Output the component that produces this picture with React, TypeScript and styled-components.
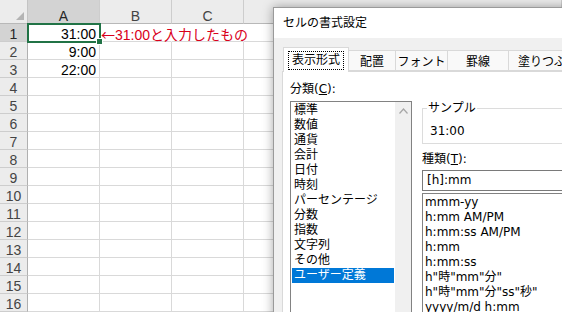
import { Fragment } from 'react';
import styled, { createGlobalStyle } from 'styled-components';

const GlobalStyle = createGlobalStyle`
  html, body {
    margin: 0;
    padding: 0;
  }
  body {
    background: #fff;
    font-family: "Liberation Sans", "Noto Sans CJK JP", sans-serif;
  }
`;

const Screen = styled.div`
  position: relative;
  width: 562px;
  height: 312px;
  overflow: hidden;
  background: #fff;
`;

/* ---------- spreadsheet ---------- */

const Sheet = styled.div`
  display: grid;
  grid-template-columns: 28px 72px 72px 72px 1fr;
  grid-template-rows: 24px;
  grid-auto-rows: 18px;
  font-family: "Liberation Sans", "Noto Sans CJK JP", sans-serif;
  font-size: 14px;
  color: #000;
`;

const Corner = styled.div`
  box-sizing: border-box;
  display: flex;
  align-items: flex-end;
  justify-content: flex-end;
  padding: 0 3px 3px 0;
  background: #ececec;
  border-right: 1px solid #c4c4c4;
  border-bottom: 1px solid #b8b8b8;
`;

const ColHeader = styled.div<{ $selected?: boolean }>`
  box-sizing: border-box;
  padding-top: 9px;
  line-height: 14px;
  text-align: center;
  color: ${p => (p.$selected ? '#262626' : '#444')};
  background: ${p => (p.$selected ? '#d3d3d3' : '#ececec')};
  border-right: 1px solid #cdcdcd;
  border-bottom: 1px solid #b8b8b8;
`;

const RowHeader = styled.div<{ $selected?: boolean }>`
  box-sizing: border-box;
  padding-top: 3px;
  line-height: 14px;
  text-align: center;
  color: ${p => (p.$selected ? '#262626' : '#444')};
  background: ${p => (p.$selected ? '#d3d3d3' : '#ececec')};
  border-right: 1px solid #b0b0b0;
  border-bottom: 1px solid #cdcdcd;
`;

const Cell = styled.div<{ $active?: boolean; $noRight?: boolean }>`
  box-sizing: border-box;
  padding: 3px 3px 0 0;
  line-height: 14px;
  text-align: right;
  white-space: nowrap;
  border-right: 1px solid ${p => (p.$noRight ? 'transparent' : '#d9d9d9')};
  border-bottom: 1px solid #d9d9d9;
  ${p =>
    p.$active &&
    `
    position: relative;
    z-index: 2;
    outline: 2px solid #217346;
    outline-offset: -1px;
    &::after {
      content: '';
      position: absolute;
      right: -4px;
      bottom: -4px;
      width: 5px;
      height: 5px;
      background: #217346;
      border: 1px solid #fff;
    }
  `}
`;

const Note = styled(Cell)`
  padding: 3px 0 0 1px;
  text-align: left;
  overflow: visible;
  color: #d9001a;
`;

const Arrow = styled.span`
  font-family: "Noto Sans CJK JP", sans-serif;
`;

/* ---------- dialog ---------- */

const Dialog = styled.div`
  position: absolute;
  left: 273px;
  top: 7px;
  width: 380px;
  height: 340px;
  background: #f0f0f0;
  border: 1px solid #9a9a9a;
  box-shadow: 0 0 10px rgba(0, 0, 0, 0.35);
  font-family: "DejaVu Sans", "Noto Sans CJK JP", sans-serif;
  font-size: 12px;
  color: #000;
`;

const TitleBar = styled.div`
  height: 30px;
  line-height: 30px;
  padding-left: 9px;
  background: #fff;
`;

const Body = styled.div`
  padding: 9px 0 0 8px;
`;

const TabStrip = styled.div`
  display: flex;
  align-items: flex-end;
  height: 24px;
  padding-left: 1px;
`;

const Tab = styled.div<{ $active?: boolean; $w: number }>`
  box-sizing: border-box;
  flex: none;
  display: flex;
  align-items: center;
  justify-content: center;
  width: ${p => p.$w}px;
  height: ${p => (p.$active ? 25 : 21)}px;
  margin-right: -1px;
  margin-bottom: ${p => (p.$active ? -1 : 0)}px;
  position: relative;
  z-index: ${p => (p.$active ? 2 : 1)};
  background: ${p => (p.$active ? '#fff' : '#f9f9f9')};
  border: 1px solid #d9d9d9;
  border-bottom: ${p => (p.$active ? 'none' : '1px solid #d9d9d9')};
  white-space: nowrap;
`;

const Focus = styled.span`
  padding: 1px 3px;
  line-height: 15px;
  border: 1px dotted #000;
`;

const Panel = styled.div`
  display: grid;
  grid-template-columns: 122px 1fr;
  column-gap: 10px;
  height: 280px;
  padding: 10px 0 0 7px;
  background: #fff;
  border: 1px solid #d9d9d9;
`;

const Column = styled.div`
  display: flex;
  flex-direction: column;
`;

const RightColumn = styled(Column)`
  padding-top: 19px;
`;

const Label = styled.div`
  line-height: 15px;
`;

const ListBox = styled.div`
  display: flex;
  height: 220px;
  margin-top: 4px;
  border: 1px solid #828282;
`;

const Items = styled.div`
  flex: 1;
  padding: 1px;
`;

const Item = styled.div<{ $selected?: boolean }>`
  padding-left: 2px;
  line-height: 15px;
  white-space: nowrap;
  color: ${p => (p.$selected ? '#fff' : '#000')};
  background: ${p => (p.$selected ? '#0078d7' : 'transparent')};
`;

const ScrollTrack = styled.div`
  width: 16px;
  display: flex;
  justify-content: center;
  padding-top: 6px;
  background: #f0f0f0;
`;

const Group = styled.fieldset`
  margin: 0;
  padding: 0;
  border: 1px solid #dcdcdc;
  min-width: 0;
`;

const Legend = styled.legend`
  margin-left: 4px;
  padding: 0 1px;
  line-height: 15px;
`;

const SampleValue = styled.div`
  padding: 8px 0 4px 7px;
  line-height: 15px;
`;

const TypeLabel = styled(Label)`
  margin-top: 8px;
`;

const FormatInput = styled.div`
  box-sizing: border-box;
  height: 21px;
  margin-top: 3px;
  padding-left: 4px;
  line-height: 19px;
  border: 1px solid #7a7a7a;
`;

const FormatList = styled.div`
  height: 160px;
  margin-top: 2px;
  padding: 1px 0;
  border: 1px solid #828282;
`;

const Format = styled.div`
  padding-left: 2px;
  line-height: 15px;
  white-space: nowrap;
`;

const rows = Array.from({ length: 16 }, (_, i) => i + 1);
const values: Record<number, string> = { 1: '31:00', 2: '9:00', 3: '22:00' };

const tabs = [
  { label: '表示形式', w: 66 },
  { label: '配置', w: 48 },
  { label: 'フォント', w: 53 },
  { label: '罫線', w: 62 },
  { label: '塗りつぶし', w: 80 },
];

const categories = [
  '標準', '数値', '通貨', '会計', '日付', '時刻',
  'パーセンテージ', '分数', '指数', '文字列', 'その他', 'ユーザー定義',
];

const formats = [
  'mmm-yy',
  'h:mm AM/PM',
  'h:mm:ss AM/PM',
  'h:mm',
  'h:mm:ss',
  'h"時"mm"分"',
  'h"時"mm"分"ss"秒"',
  'yyyy/m/d h:mm',
];

export default function App() {
  return (
    <Screen>
      <GlobalStyle />
      <Sheet>
        <Corner>
          <svg width="8" height="8" viewBox="0 0 8 8">
            <polygon points="8,0 8,8 0,8" fill="#b4b4b4" />
          </svg>
        </Corner>
        {['A', 'B', 'C', ''].map(c => (
          <ColHeader key={c || 'D'} $selected={c === 'A'}>
            {c}
          </ColHeader>
        ))}
        {rows.map(r => (
          <Fragment key={r}>
            <RowHeader $selected={r === 1}>{r}</RowHeader>
            <Cell $active={r === 1}>{values[r]}</Cell>
            {r === 1 ? (
              <Note $noRight>
                <Arrow>←</Arrow>31:00と入力したもの
              </Note>
            ) : (
              <Cell />
            )}
            <Cell $noRight={r === 1} />
            <Cell />
          </Fragment>
        ))}
      </Sheet>

      <Dialog>
        <TitleBar>セルの書式設定</TitleBar>
        <Body>
          <TabStrip>
            {tabs.map((t, i) => (
              <Tab key={t.label} $w={t.w} $active={i === 0}>
                {i === 0 ? <Focus>{t.label}</Focus> : t.label}
              </Tab>
            ))}
          </TabStrip>
          <Panel>
            <Column>
              <Label>
                分類(<u>C</u>):
              </Label>
              <ListBox>
                <Items>
                  {categories.map(c => (
                    <Item key={c} $selected={c === 'ユーザー定義'}>
                      {c}
                    </Item>
                  ))}
                </Items>
                <ScrollTrack>
                  <svg width="9" height="6" viewBox="0 0 9 6">
                    <polyline points="0.5,5.5 4.5,1 8.5,5.5" fill="none" stroke="#a6a6a6" strokeWidth="1.2" />
                  </svg>
                </ScrollTrack>
              </ListBox>
            </Column>
            <RightColumn>
              <Group>
                <Legend>サンプル</Legend>
                <SampleValue>31:00</SampleValue>
              </Group>
              <TypeLabel>
                種類(<u>T</u>):
              </TypeLabel>
              <FormatInput>[h]:mm</FormatInput>
              <FormatList>
                {formats.map(f => (
                  <Format key={f}>{f}</Format>
                ))}
              </FormatList>
            </RightColumn>
          </Panel>
        </Body>
      </Dialog>
    </Screen>
  );
}
